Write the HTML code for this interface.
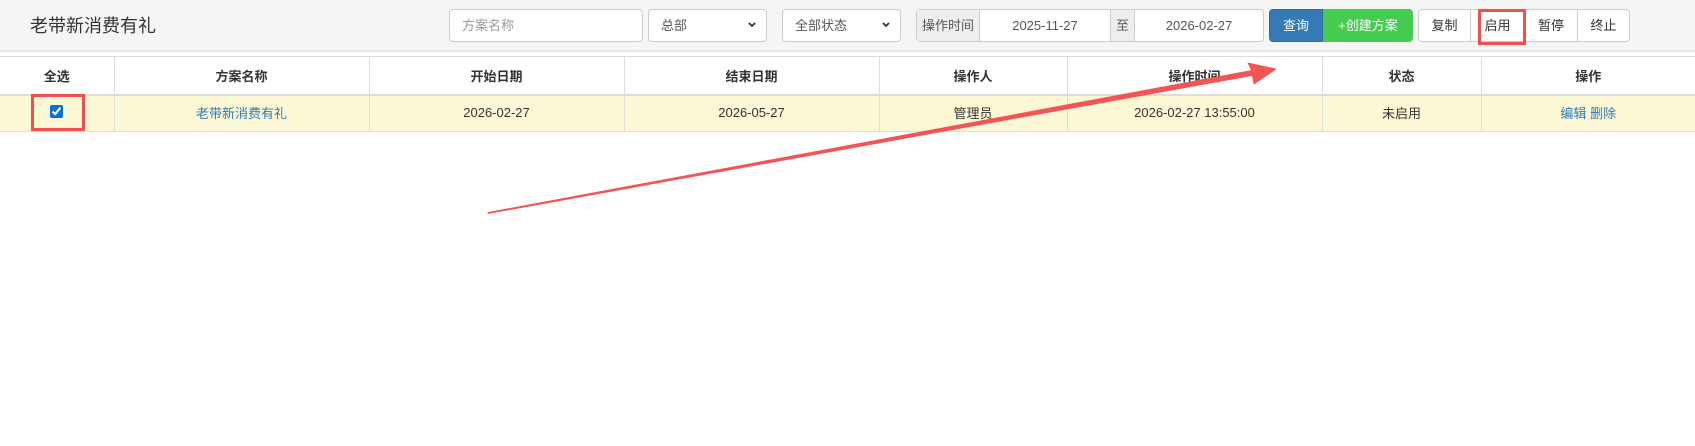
<!DOCTYPE html>
<html><head><meta charset="utf-8"><style>
*{box-sizing:border-box;margin:0;padding:0}
body{width:1695px;height:446px;background:#fff;font-family:"Liberation Sans","Noto Sans CJK SC",sans-serif;font-size:13px;color:#333;position:relative;overflow:hidden}
.top{position:absolute;left:0;top:0;width:1695px;height:52px;background:#f5f5f5;border-bottom:2px solid #e6e6e6}
.title{position:absolute;left:30px;top:12px;font-size:18px;color:#333}
.ctl{position:absolute;top:9px;height:33px;border:1px solid #ccc;border-radius:4px;background:#fff;font-size:13px;line-height:31px;padding-left:12px;color:#555}
.btn{position:absolute;top:9px;height:33px;line-height:31px;text-align:center;border:1px solid #ccc;background:#fff;color:#333;font-size:13px}
table{position:absolute;left:0;top:56px;width:1695px;border-collapse:collapse}
th,td{border-right:1px solid #ddd;text-align:center;font-size:13px}
th{height:38px;font-weight:bold;border-top:1px solid #ddd;border-bottom:2px solid #ddd}
td{height:37px;background:#fcf8d6;border-bottom:1px solid #ddd;padding-bottom:2px}
a{color:#337ab7;text-decoration:none}
.red{position:absolute;border:3px solid #f05050}
.chev{position:absolute;right:10px;top:12px}
</style></head><body>
<div class="top"></div>
<div class="title">老带新消费有礼</div>
<div class="ctl" style="left:449px;width:194px;color:#999">方案名称</div>
<div class="ctl" style="left:648px;width:119px">总部<svg class="chev" width="8" height="6"><path d="M1 1l3 3 3-3" stroke="#333" stroke-width="1.8" fill="none"/></svg></div>
<div class="ctl" style="left:782px;width:119px">全部状态<svg class="chev" width="8" height="6"><path d="M1 1l3 3 3-3" stroke="#333" stroke-width="1.8" fill="none"/></svg></div>
<div class="ctl" style="left:916px;width:348px;padding:0"></div>
<div style="position:absolute;left:917px;top:10px;width:63px;height:31px;background:#eee;border-right:1px solid #ccc;line-height:31px;text-align:center;color:#555">操作时间</div>
<div style="position:absolute;left:980px;top:10px;width:130px;line-height:31px;text-align:center;color:#555">2025-11-27</div>
<div style="position:absolute;left:1110px;top:10px;width:25px;height:31px;background:#eee;border-left:1px solid #ccc;border-right:1px solid #ccc;line-height:31px;text-align:center;color:#555">至</div>
<div style="position:absolute;left:1135px;top:10px;width:128px;line-height:31px;text-align:center;color:#555">2026-02-27</div>
<div class="btn" style="left:1269px;width:54px;background:#337ab7;border-color:#2e6da4;color:#fff;border-radius:4px 0 0 4px">查询</div>
<div class="btn" style="left:1323px;width:90px;background:#47cc52;border-color:#47cc52;color:#fff;border-radius:0 4px 4px 0">+创建方案</div>
<div class="btn" style="left:1418px;width:53px;border-radius:4px 0 0 4px">复制</div>
<div class="btn" style="left:1470px;width:55px">启用</div>
<div class="btn" style="left:1524px;width:54px">暂停</div>
<div class="btn" style="left:1577px;width:53px;border-radius:0 4px 4px 0">终止</div>
<div class="red" style="left:1478px;top:9px;width:48px;height:36px"></div>
<table>
<tr><th style="width:114px">全选</th><th style="width:255px">方案名称</th><th style="width:255px">开始日期</th><th style="width:255px">结束日期</th><th style="width:188px">操作人</th><th style="width:255px">操作时间</th><th style="width:159px">状态</th><th style="border-right:none">操作</th></tr>
<tr><td><input type="checkbox" checked style="width:13px;height:13px;accent-color:#0b6fd6;margin-top:2px"></td><td><a>老带新消费有礼</a></td><td>2026-02-27</td><td>2026-05-27</td><td>管理员</td><td>2026-02-27 13:55:00</td><td>未启用</td><td style="border-right:none"><a>编辑</a> <a>删除</a></td></tr>
</table>
<div class="red" style="left:31px;top:94px;width:54px;height:37px"></div>
<svg style="position:absolute;left:0;top:0" width="1695" height="446"><polygon points="487.9,212.5 1251.6,70.5 1248,63 1276,69 1254,84 1252.4,75.5 488.1,213.5" fill="#f25555" stroke="#f25555" stroke-width="0.8" stroke-linejoin="round"/></svg>
</body></html>
